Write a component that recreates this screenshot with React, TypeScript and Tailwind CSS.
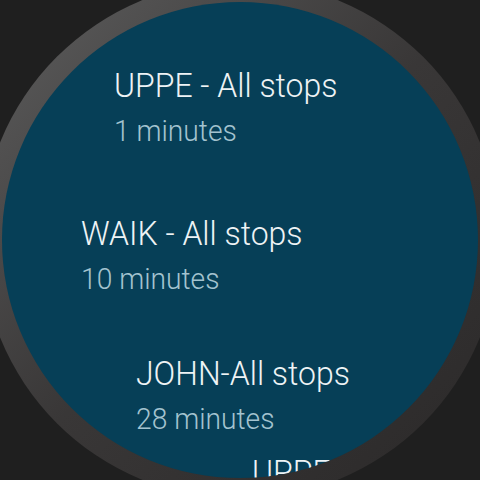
import React from 'react';

const departures = [
  { title: 'UPPE - All stops', eta: '1 minutes', indent: 'ml-[112px]', gap: 'mt-0' },
  { title: 'WAIK - All stops', eta: '10 minutes', indent: 'ml-[79px]', gap: 'mt-[64px]' },
  { title: 'JOHN-All stops', eta: '28 minutes', indent: 'ml-[134px]', gap: 'mt-[56px]' },
  { title: 'UPPE - All stops', eta: '33 minutes', indent: 'ml-[250px]', gap: 'mt-[15px]' },
];

export default function App() {
  return (
    <div className="w-[480px] h-[480px] overflow-hidden bg-[#1f1f1f] flex items-center justify-center">
      {/* bezel */}
      <div className="w-[518px] h-[518px] shrink-0 rounded-full bg-linear-to-br from-[#5f5f5f] via-[#393737] to-[#2a2828] flex items-center justify-center">
        {/* screen */}
        <div
          className="w-[476px] h-[476px] shrink-0 rounded-full bg-[#063f57] overflow-hidden flex flex-col pt-[63px]"
          style={{ fontFamily: 'Roboto, "Noto Sans", sans-serif' }}
        >
          {departures.map((d, i) => (
            <div key={i} className={`${d.indent} ${d.gap} whitespace-nowrap font-light origin-left scale-x-[0.94]`}>
              <div className="text-[34px] leading-[40px] text-[#eef3f5]">{d.title}</div>
              <div className="mt-2 text-[30px] leading-[36px] text-[#a3c3cf]">{d.eta}</div>
            </div>
          ))}
        </div>
      </div>
    </div>
  );
}
